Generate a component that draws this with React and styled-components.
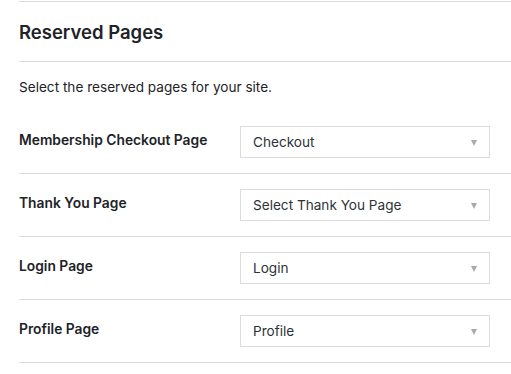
import React from 'react'
import styled, { createGlobalStyle } from 'styled-components'

const GlobalStyle = createGlobalStyle`
  body {
    margin: 0;
    background: #ffffff;
    font-family: Inter, "Liberation Sans", sans-serif;
    color: #1d2327;
  }
`

const Wrapper = styled.div`
  padding: 1px 0 0 19px;
`

const Section = styled.div`
  border-top: 1px solid #dcdcde;
`

const Title = styled.h2`
  margin: 0;
  height: 59px;
  display: flex;
  align-items: center;
  font-size: 18.5px;
  font-weight: 600;
  border-bottom: 1px solid #dcdcde;
`

const Description = styled.p`
  margin: 0;
  height: 49px;
  display: flex;
  align-items: center;
  font-size: 13.6px;
`

const Row = styled.div`
  display: flex;
  align-items: flex-start;
  padding: 15px 0;
  border-bottom: 1px solid #dcdcde;
`

const Label = styled.div`
  width: 221px;
  font-size: 13.8px;
  font-weight: 600;
  line-height: 18px;
  padding-top: 5px;
`

const Select = styled.div`
  width: 250px;
  height: 32px;
  box-sizing: border-box;
  border: 1px solid #dcdcde;
  background: #fff;
  display: flex;
  align-items: center;
  justify-content: space-between;
  padding: 0 12px;
  font-size: 13.6px;
  color: #2c3338;
`

const Arrow = styled.span`
  width: 0;
  height: 0;
  border-left: 3.5px solid transparent;
  border-right: 3.5px solid transparent;
  border-top: 6px solid #a7aaad;
  margin-top: 2px;
`

const pages = [
  { label: 'Membership Checkout Page', value: 'Checkout' },
  { label: 'Thank You Page', value: 'Select Thank You Page' },
  { label: 'Login Page', value: 'Login' },
  { label: 'Profile Page', value: 'Profile' },
]

const App = () => {
  return (
    <Wrapper>
      <GlobalStyle />
      <Section>
        <Title>Reserved Pages</Title>
        <Description>Select the reserved pages for your site.</Description>
        {pages.map((page) => (
          <Row key={page.label}>
            <Label>{page.label}</Label>
            <Select>
              <span>{page.value}</span>
              <Arrow />
            </Select>
          </Row>
        ))}
      </Section>
    </Wrapper>
  )
}

export default App
